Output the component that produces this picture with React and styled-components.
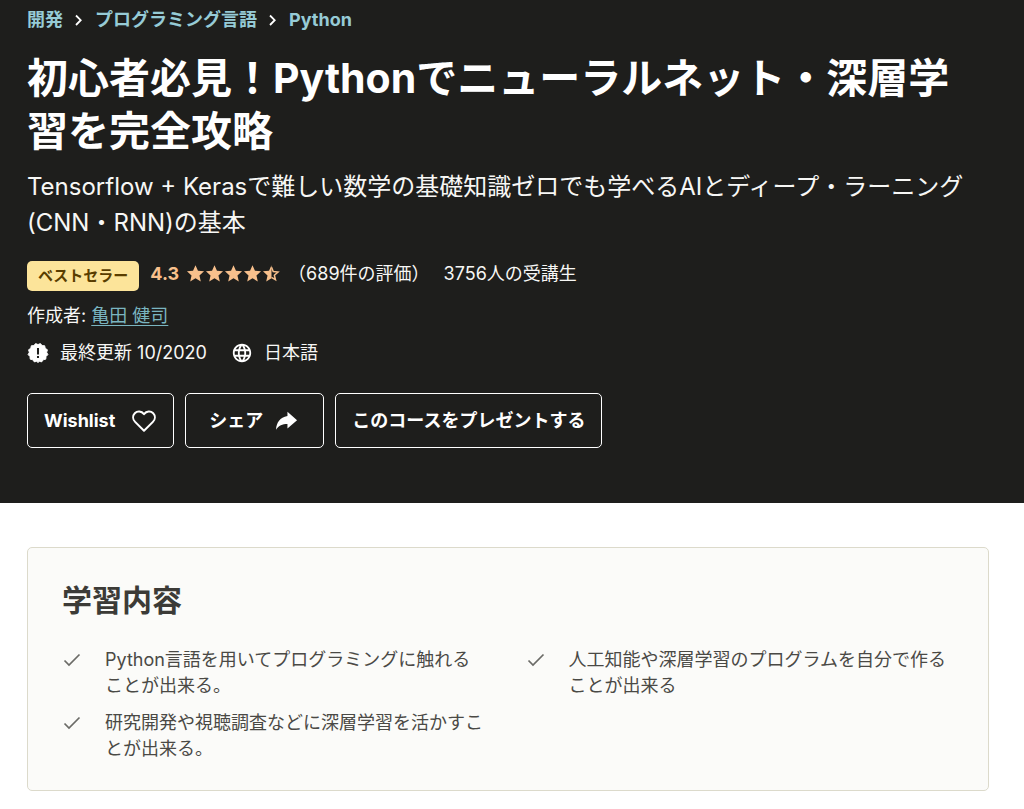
import React from "react";
import styled, { createGlobalStyle } from "styled-components";

const learnings = [
  "Python言語を用いてプログラミングに触れることが出来る。",
  "人工知能や深層学習のプログラムを自分で作ることが出来る",
  "研究開発や視聴調査などに深層学習を活かすことが出来る。",
];

const STAR =
  "M12 1.5 15.1 8.6 22.8 9.3 17 14.4 18.7 22 12 18 5.3 22 7 14.4 1.2 9.3 8.9 8.6Z";

const App = () => {
  return (
    <>
      <GlobalStyle />
      <Hero>
        <Breadcrumb aria-label="カテゴリー">
          <a href="#development">開発</a>
          <Chevron />
          <a href="#languages">プログラミング言語</a>
          <Chevron />
          <a href="#python">Python</a>
        </Breadcrumb>

        <Title>初心者必見！Pythonでニューラルネット・深層学習を完全攻略</Title>
        <Lead>
          Tensorflow + Kerasで難しい数学の基礎知識ゼロでも学べるAIとディープ・ラーニング(CNN・RNN)の基本
        </Lead>

        <RatingRow>
          <Badge>ベストセラー</Badge>
          <Score>4.3</Score>
          <Stars>
            <Star />
            <Star />
            <Star />
            <Star />
            <Star half />
          </Stars>
          <Reviews>（689件の評価）</Reviews>
          <span>3756人の受講生</span>
        </RatingRow>

        <Author>
          作成者: <a href="#instructor">亀田 健司</a>
        </Author>

        <MetaRow>
          <Meta>
            <UpdateIcon />
            最終更新 10/2020
          </Meta>
          <Meta>
            <GlobeIcon />
            日本語
          </Meta>
        </MetaRow>

        <Actions>
          <ActionButton type="button">
            Wishlist
            <HeartIcon />
          </ActionButton>
          <ActionButton type="button" $wide>
            シェア
            <ShareIcon />
          </ActionButton>
          <ActionButton type="button">このコースをプレゼントする</ActionButton>
        </Actions>
      </Hero>

      <Main>
        <Card>
          <CardTitle>学習内容</CardTitle>
          <LearnList>
            {learnings.map((text) => (
              <LearnItem key={text}>
                <CheckIcon />
                <span>{text}</span>
              </LearnItem>
            ))}
          </LearnList>
        </Card>
      </Main>
    </>
  );
};

export default App;

/* icons */
const Chevron = () => (
  <svg width="10" height="14" viewBox="0 0 10 14" aria-hidden="true">
    <path
      d="M2 2.500 6.700 7.200 2 12"
      fill="none"
      stroke="#fff"
      strokeWidth="1.800"
    />
  </svg>
);

const Star = ({ half }) => (
  <svg width="19" height="19" viewBox="0 0 24 24" aria-hidden="true">
    {half ? (
      <>
        <path d="M12 1.5V18L5.3 22 7 14.4 1.2 9.3 8.9 8.6Z" fill="#f8c08c" />
        <path
          d="M12 4.2 14.2 9.6 20.2 10.2 15.6 14.1 17 19.9 12 16.8"
          fill="none"
          stroke="#f8c08c"
          strokeWidth="1.9"
        />
      </>
    ) : (
      <path d={STAR} fill="#f8c08c" />
    )}
  </svg>
);

// 12個の山があるバッジ形
const UpdateIcon = () => (
  <svg width="22" height="22" viewBox="0 0 24 24" aria-hidden="true">
    <path
      d="M12 2.800 14.600 1.700 16.500 3.900 19.300 4.100 19.900 6.900 22.300 8.500 21.500 11.300 22.800 13.800 20.800 15.800 20.500 18.700 17.700 19.400 16 21.700 13.300 21 12 22.500 10.700 21 8 21.700 6.300 19.400 3.500 18.700 3.200 15.800 1.200 13.800 2.500 11.300 1.700 8.500 4.100 6.900 4.700 4.100 7.500 3.900 9.400 1.700Z"
      fill="#fff"
      stroke="#fff"
      strokeLinejoin="round"
    />
    <path d="M10.900 6.500h2.200v7h-2.200zM10.900 15.200h2.200v2.200h-2.200z" fill="#1e1e1c" />
  </svg>
);

const GlobeIcon = () => (
  <svg width="22" height="22" viewBox="0 0 24 24" aria-hidden="true">
    <path
      d="M11.99 2C6.47 2 2 6.48 2 12s4.47 10 9.99 10C17.52 22 22 17.52 22 12S17.52 2 11.99 2zm6.93 6h-2.95c-.32-1.25-.78-2.45-1.38-3.56 1.84.63 3.37 1.91 4.33 3.56zM12 4.04c.83 1.2 1.48 2.53 1.91 3.96h-3.82c.43-1.43 1.08-2.76 1.91-3.96zM4.26 14C4.1 13.36 4 12.69 4 12s.1-1.36.26-2h3.38c-.08.66-.14 1.32-.14 2s.06 1.34.14 2H4.26zm.82 2h2.95c.32 1.25.78 2.45 1.38 3.56-1.84-.63-3.37-1.9-4.33-3.56zm2.95-8H5.08c.96-1.66 2.49-2.93 4.33-3.56C8.81 5.55 8.35 6.75 8.03 8zM12 19.96c-.83-1.2-1.48-2.53-1.91-3.96h3.82c-.43 1.43-1.08 2.76-1.91 3.96zM14.34 14H9.66c-.09-.66-.16-1.32-.16-2s.07-1.35.16-2h4.68c.09.65.16 1.32.16 2s-.07 1.34-.16 2zm.25 5.56c.6-1.11 1.06-2.31 1.38-3.56h2.95c-.96 1.65-2.49 2.93-4.33 3.56zM16.36 14c.08-.66.14-1.32.14-2s-.06-1.34-.14-2h3.38c.16.64.26 1.31.26 2s-.1 1.36-.26 2h-3.38z"
      fill="#fff"
    />
  </svg>
);

const HeartIcon = () => (
  <svg width="29" height="26" viewBox="-3 0 29 26" aria-hidden="true">
    <path
      d="M13 22.800 4.100 13.900C1.600 11.300 1.500 7.600 3.800 5.200 6.300 2.700 10.400 2.800 13 6.100 15.600 2.800 19.700 2.700 22.200 5.200 24.500 7.600 24.400 11.300 21.900 13.900Z"
      fill="none"
      stroke="#fff"
      strokeWidth="2"
      strokeLinejoin="round"
    />
  </svg>
);

const ShareIcon = () => (
  <svg width="24" height="24" viewBox="3 1 22 22" aria-hidden="true">
    <path
      d="M13.500 7.500V3.500l8.800 7.700-8.800 7.700v-4.200c-4.800 0-7.800 1.300-10.500 5.300C3.500 13.500 6.500 8.700 13.500 7.500z"
      fill="#fff"
    />
  </svg>
);

const CheckIcon = () => (
  <svg width="20" height="26" viewBox="0 0 20 26" aria-hidden="true">
    <path
      d="M2.500 13.500 7 18 17.500 7.500"
      fill="none"
      stroke="#6b6b67"
      strokeWidth="1.700"
    />
  </svg>
);

/* styled-components */
const GlobalStyle = createGlobalStyle`
  body {
    margin: 0;
    background: #fff;
    color: #3c3b37;
    font-family: Inter, "Noto Sans CJK JP", sans-serif;
    font-size: 18px;
    line-height: 26px;
  }
  svg {
    display: block;
    flex-shrink: 0;
  }
`;
const Hero = styled.header`
  background: #1e1e1c;
  color: #f7f7f5;
  padding: 7px 35px 55px 27px;
`;
const Breadcrumb = styled.nav`
  display: flex;
  align-items: center;
  gap: 11px;
  font-weight: 700;
  a {
    color: #96cbd6;
    text-decoration: none;
  }
`;
const Title = styled.h1`
  margin: 19px 0 0;
  color: #fff;
  font-size: 41px;
  line-height: 53px;
  font-weight: 700;
`;
const Lead = styled.p`
  margin: 11px 0 0;
  font-size: 24px;
  line-height: 36px;
`;
const RatingRow = styled.div`
  display: flex;
  align-items: flex-start;
  margin-top: 20px;
`;
const Badge = styled.span`
  background: #fce49a;
  color: #593d00;
  border-radius: 5px;
  padding: 0 11px;
  font-size: 15px;
  line-height: 30px;
  font-weight: 700;
`;
const Score = styled.span`
  margin-left: 11px;
  color: #f8c08c;
  font-weight: 700;
`;
const Stars = styled.span`
  display: flex;
  margin: 3px 0 0 7px;
`;
const Reviews = styled.span`
  margin: 0 14px 0 7px;
`;
const Author = styled.p`
  margin: 12px 0 0;
  a {
    color: #7ab5c0;
    text-underline-offset: 3px;
  }
`;
const MetaRow = styled.div`
  display: flex;
  gap: 24px;
  margin-top: 11px;
`;
const Meta = styled.span`
  display: flex;
  align-items: center;
  gap: 11px;
`;
const Actions = styled.div`
  display: flex;
  gap: 11px;
  margin-top: 27px;
`;
const ActionButton = styled.button`
  display: flex;
  align-items: center;
  justify-content: center;
  gap: 13px;
  height: 55px;
  padding: 0 ${({ $wide }) => ($wide ? "23px" : "16px")};
  border: 1px solid #fff;
  border-radius: 5px;
  background: transparent;
  color: #fff;
  font: inherit;
  font-weight: 700;
  cursor: pointer;
`;
const Main = styled.main`
  padding: 44px 35px 18px 27px;
`;
const Card = styled.section`
  border: 1px solid #dcdacb;
  border-radius: 5px;
  background: #fbfbf9;
  padding: 33px 34px 28px;
`;
const CardTitle = styled.h2`
  margin: 0;
  font-size: 30px;
  line-height: 38px;
  font-weight: 700;
`;
const LearnList = styled.ul`
  display: grid;
  grid-template-columns: 1fr 1fr;
  gap: 11px 35px;
  margin: 28px 0 0;
  padding: 0;
  list-style: none;
`;
const LearnItem = styled.li`
  display: flex;
  gap: 23px;
  padding-right: 4px;
  color: #4a4945;
`;
